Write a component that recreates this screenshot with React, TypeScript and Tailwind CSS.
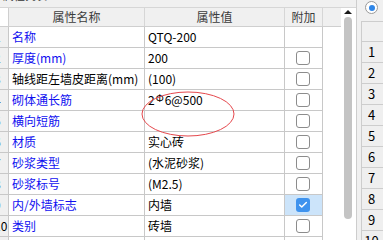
import { Check } from "lucide-react";

type Row = {
  n: number;
  name: string;
  value: React.ReactNode;
  blue: boolean;
  check: boolean | null;
  selected?: boolean;
};

const rebar = (
  <span>
    2<span className="relative -top-[3px] mx-[1px] text-[10px]">Φ</span>6@500
  </span>
);

const rows: Row[] = [
  { n: 1, name: "名称", value: "QTQ-200", blue: true, check: null },
  { n: 2, name: "厚度(mm)", value: "200", blue: true, check: false },
  { n: 3, name: "轴线距左墙皮距离(mm)", value: "(100)", blue: false, check: false },
  { n: 4, name: "砌体通长筋", value: rebar, blue: true, check: false },
  { n: 5, name: "横向短筋", value: "", blue: true, check: false },
  { n: 6, name: "材质", value: "实心砖", blue: true, check: false },
  { n: 7, name: "砂浆类型", value: "(水泥砂浆)", blue: true, check: false },
  { n: 8, name: "砂浆标号", value: "(M2.5)", blue: true, check: false },
  { n: 9, name: "内/外墙标志", value: "内墙", blue: true, check: true, selected: true },
  { n: 10, name: "类别", value: "砖墙", blue: true, check: false },
  { n: 11, name: "", value: "", blue: true, check: false },
];

function CheckBox({ on }: { on: boolean }) {
  if (on) {
    return (
      <div className="w-[14px] h-[14px] rounded-[3px] bg-[#3f93ee] flex items-center justify-center">
        <Check className="w-[10px] h-[10px] text-white" strokeWidth={3.5} />
      </div>
    );
  }
  return <div className="w-[14px] h-[14px] rounded-[3px] border border-[#8c8c8c] bg-white" />;
}

export default function App() {
  return (
    <div className="relative w-[383px] h-[240px] overflow-hidden bg-white flex font-['Noto_Sans_CJK_SC',sans-serif] text-[12px] text-black">
      {/* left: property grid */}
      <div className="w-[356px] flex flex-col shrink-0">
        <div className="h-[8px] bg-[#f0f0f0] border-b border-[#d6d6d6] overflow-hidden shrink-0">
          <div className="-mt-[12px] pl-[3px] text-[11px] leading-[14px] text-[#333]">属性列表</div>
        </div>
        <div className="flex flex-1 min-h-0">
          <div className="w-[341px] flex flex-col">
            <div className="flex h-[19px] border-b border-[#cfcfcf] shrink-0 text-[#3c3c3c]">
              <div className="w-[9px] bg-white border-r border-[#cfcfcf]" />
              <div className="w-[136px] bg-[#f0f0f0] border-r border-[#d6d6d6] flex items-center justify-center">属性名称</div>
              <div className="w-[140px] bg-[#f0f0f0] border-r border-[#d6d6d6] flex items-center justify-center">属性值</div>
              <div className="w-[38px] bg-[#f0f0f0] border-r border-[#d6d6d6] flex items-center justify-center">附加</div>
              <div className="flex-1 bg-[#f0f0f0]" />
            </div>
            {rows.map((r) => (
              <div key={r.n} className="flex h-[21px] shrink-0">
                <div className="w-[9px] bg-[#f0f0f0] border-r border-b border-[#c8c8c8] overflow-hidden flex items-center">
                  <span className="-ml-[6px] whitespace-nowrap">{r.n}</span>
                </div>
                <div
                  className={`w-[136px] border-r border-b border-[#c8c8c8] flex items-center pl-[3px] whitespace-nowrap overflow-hidden ${
                    r.blue ? "text-[#1010f0]" : "text-black"
                  }`}
                >
                  {r.name}
                </div>
                <div className="w-[140px] border-r border-b border-[#c8c8c8] flex items-center pl-[3px] whitespace-nowrap overflow-hidden">
                  {r.value}
                </div>
                <div
                  className={`w-[38px] border-r border-b border-[#c8c8c8] flex items-center justify-center pr-[2px] ${
                    r.selected ? "bg-[#cce4fa]" : "bg-white"
                  }`}
                >
                  {r.check !== null && <CheckBox on={r.check} />}
                </div>
                <div className="flex-1" />
              </div>
            ))}
          </div>
          {/* scrollbar */}
          <div className="w-[15px] bg-white flex flex-col items-center pr-[1px]">
            <div className="mt-[2px] w-0 h-0 border-l-[4px] border-r-[4px] border-b-[4px] border-l-transparent border-r-transparent border-b-[#1a1a1a]" />
            <div className="mt-[3px] w-[8px] h-[202px] rounded-full bg-[#c4c4c4]" />
          </div>
        </div>
      </div>

      {/* divider */}
      <div className="w-[1px] bg-[#cdcdcd] shrink-0" />

      {/* right panel */}
      <div className="flex-1 bg-[#f0f0f0] flex flex-col">
        <div className="h-[21px] shrink-0 pl-[8px] pt-[1px]">
          <div className="w-[13px] h-[13px] rounded-full border border-[#9a9a9a] bg-white flex items-center justify-center">
            <div className="w-[6px] h-[6px] rounded-full bg-[#2f86e8]" />
          </div>
        </div>
        <div className="ml-[4px] flex flex-col border-t border-l border-[#cdcdcd]">
          <div className="h-[20px] border-b border-[#cdcdcd] bg-[#f0f0f0]" />
          {[1, 2, 3, 4, 5, 6, 7, 8, 9, 10].map((n) => (
            <div
              key={n}
              className="h-[21px] border-b border-[#cdcdcd] bg-[#efefef] flex items-center justify-center text-[13px] pr-[2px]"
            >
              {n}
            </div>
          ))}
        </div>
      </div>

      {/* hand-drawn annotation */}
      <svg className="absolute left-[140px] top-[90px] pointer-events-none" width="96" height="48" viewBox="0 0 96 48">
        <ellipse cx="48" cy="24" rx="46" ry="22" fill="none" stroke="#e5484d" strokeWidth="1" />
      </svg>
    </div>
  );
}
